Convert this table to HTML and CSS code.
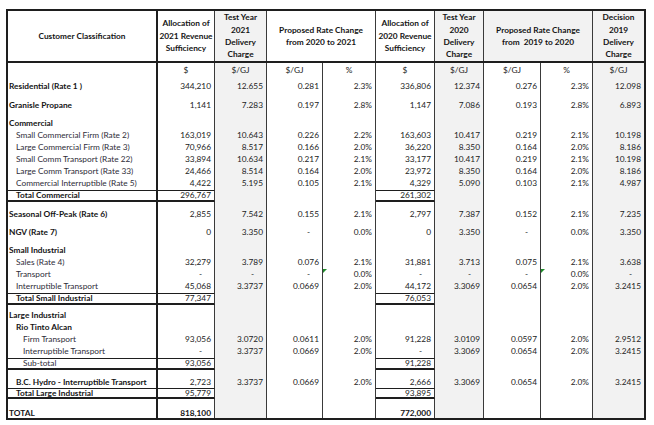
FILE: index.html
```html
<!DOCTYPE html>
<html>
<head>
<meta charset="utf-8">
<link rel="stylesheet" href="styles.css">
</head>
<body>
<div class="sheet">
  <div class="row hdr">
    <div class="c lbl">Customer Classification</div>
    <div class="c">Allocation of<br>2021 Revenue<br>Sufficiency</div>
    <div class="c g">Test Year<br>2021<br>Delivery<br>Charge</div>
    <div class="c span2">Proposed Rate Change<br>from 2020 to 2021</div>
    <div class="c">Allocation of<br>2020 Revenue<br>Sufficiency</div>
    <div class="c g">Test Year<br>2020<br>Delivery<br>Charge</div>
    <div class="c span2">Proposed Rate Change<br>from &nbsp;2019 to 2020</div>
    <div class="c g last">Decision<br>2019<br>Delivery<br>Charge</div>
  </div>

  <div class="row units"><div class="c lbl"></div><div class="c">$</div><div class="c">$/GJ</div><div class="c">$/GJ</div><div class="c">%</div><div class="c">$</div><div class="c">$/GJ</div><div class="c">$/GJ</div><div class="c">%</div><div class="c">$/GJ</div></div>

  <div class="row gap4"><div class="c lbl b">Residential (Rate 1 )</div><div class="c">344,210</div><div class="c">12.655</div><div class="c">0.281</div><div class="c">2.3%</div><div class="c">336,806</div><div class="c">12.374</div><div class="c">0.276</div><div class="c">2.3%</div><div class="c">12.098</div></div>

  <div class="row gap7"><div class="c lbl b">Granisle Propane</div><div class="c">1,141</div><div class="c">7.283</div><div class="c">0.197</div><div class="c">2.8%</div><div class="c">1,147</div><div class="c">7.086</div><div class="c">0.193</div><div class="c">2.8%</div><div class="c">6.893</div></div>

  <div class="row gap6"><div class="c lbl b">Commercial</div><div class="c"></div><div class="c"></div><div class="c"></div><div class="c"></div><div class="c"></div><div class="c"></div><div class="c"></div><div class="c"></div><div class="c"></div></div>
  <div class="row"><div class="c lbl i1">Small Commercial Firm (Rate 2)</div><div class="c">163,019</div><div class="c">10.643</div><div class="c">0.226</div><div class="c">2.2%</div><div class="c">163,603</div><div class="c">10.417</div><div class="c">0.219</div><div class="c">2.1%</div><div class="c">10.198</div></div>
  <div class="row"><div class="c lbl i1">Large Commercial Firm (Rate 3)</div><div class="c">70,966</div><div class="c">8.517</div><div class="c">0.166</div><div class="c">2.0%</div><div class="c">36,220</div><div class="c">8.350</div><div class="c">0.164</div><div class="c">2.0%</div><div class="c">8.186</div></div>
  <div class="row"><div class="c lbl i1">Small Comm Transport (Rate 22)</div><div class="c">33,894</div><div class="c">10.634</div><div class="c">0.217</div><div class="c">2.1%</div><div class="c">33,177</div><div class="c">10.417</div><div class="c">0.219</div><div class="c">2.1%</div><div class="c">10.198</div></div>
  <div class="row"><div class="c lbl i1">Large Comm Transport (Rate 33)</div><div class="c">24,466</div><div class="c">8.514</div><div class="c">0.164</div><div class="c">2.0%</div><div class="c">23,972</div><div class="c">8.350</div><div class="c">0.164</div><div class="c">2.0%</div><div class="c">8.186</div></div>
  <div class="row"><div class="c lbl i1">Commercial Interruptible (Rate 5)</div><div class="c">4,422</div><div class="c">5.195</div><div class="c">0.105</div><div class="c">2.1%</div><div class="c">4,329</div><div class="c">5.090</div><div class="c">0.103</div><div class="c">2.1%</div><div class="c">4.987</div></div>
  <div class="row tot"><div class="c lbl b i1 box">Total Commercial</div><div class="c box">296,767</div><div class="c"></div><div class="c"></div><div class="c"></div><div class="c box">261,302</div><div class="c"></div><div class="c"></div><div class="c"></div><div class="c"></div></div>

  <div class="row gap7"><div class="c lbl b">Seasonal Off-Peak (Rate 6)</div><div class="c">2,855</div><div class="c">7.542</div><div class="c">0.155</div><div class="c">2.1%</div><div class="c">2,797</div><div class="c">7.387</div><div class="c">0.152</div><div class="c">2.1%</div><div class="c">7.235</div></div>

  <div class="row gap6"><div class="c lbl b">NGV (Rate 7)</div><div class="c">0</div><div class="c">3.350</div><div class="c dash">-</div><div class="c">0.0%</div><div class="c">0</div><div class="c">3.350</div><div class="c dash">-</div><div class="c">0.0%</div><div class="c">3.350</div></div>

  <div class="row gap6"><div class="c lbl b">Small Industrial</div><div class="c"></div><div class="c"></div><div class="c"></div><div class="c"></div><div class="c"></div><div class="c"></div><div class="c"></div><div class="c"></div><div class="c"></div></div>
  <div class="row"><div class="c lbl i1">Sales (Rate 4)</div><div class="c">32,279</div><div class="c">3.789</div><div class="c">0.076</div><div class="c">2.1%</div><div class="c">31,881</div><div class="c">3.713</div><div class="c">0.075</div><div class="c">2.1%</div><div class="c">3.638</div></div>
  <div class="row"><div class="c lbl i1">Transport</div><div class="c dash">-</div><div class="c dash">-</div><div class="c dash">-</div><div class="c flag">0.0%</div><div class="c dash">-</div><div class="c dash">-</div><div class="c dash">-</div><div class="c flag">0.0%</div><div class="c dash">-</div></div>
  <div class="row"><div class="c lbl i1">Interruptible Transport</div><div class="c">45,068</div><div class="c">3.3737</div><div class="c">0.0669</div><div class="c">2.0%</div><div class="c">44,172</div><div class="c">3.3069</div><div class="c">0.0654</div><div class="c">2.0%</div><div class="c">3.2415</div></div>
  <div class="row tot"><div class="c lbl b i1 box">Total Small Industrial</div><div class="c box">77,347</div><div class="c"></div><div class="c"></div><div class="c"></div><div class="c box">76,053</div><div class="c"></div><div class="c"></div><div class="c"></div><div class="c"></div></div>

  <div class="row gap5"><div class="c lbl b">Large Industrial</div><div class="c"></div><div class="c"></div><div class="c"></div><div class="c"></div><div class="c"></div><div class="c"></div><div class="c"></div><div class="c"></div><div class="c"></div></div>
  <div class="row"><div class="c lbl b i1">Rio Tinto Alcan</div><div class="c"></div><div class="c"></div><div class="c"></div><div class="c"></div><div class="c"></div><div class="c"></div><div class="c"></div><div class="c"></div><div class="c"></div></div>
  <div class="row"><div class="c lbl i2">Firm Transport</div><div class="c">93,056</div><div class="c">3.0720</div><div class="c">0.0611</div><div class="c">2.0%</div><div class="c">91,228</div><div class="c">3.0109</div><div class="c">0.0597</div><div class="c">2.0%</div><div class="c">2.9512</div></div>
  <div class="row"><div class="c lbl i2">Interruptible Transport</div><div class="c dash">-</div><div class="c">3.3737</div><div class="c">0.0669</div><div class="c">2.0%</div><div class="c dash">-</div><div class="c">3.3069</div><div class="c">0.0654</div><div class="c">2.0%</div><div class="c">3.2415</div></div>
  <div class="row tot"><div class="c lbl i2 box">Sub-total</div><div class="c box">93,056</div><div class="c"></div><div class="c"></div><div class="c"></div><div class="c box">91,228</div><div class="c"></div><div class="c"></div><div class="c"></div><div class="c"></div></div>

  <div class="row gap7 h11"><div class="c lbl b i1">B.C. Hydro - Interruptible Transport</div><div class="c">2,723</div><div class="c">3.3737</div><div class="c">0.0669</div><div class="c">2.0%</div><div class="c">2,666</div><div class="c">3.3069</div><div class="c">0.0654</div><div class="c">2.0%</div><div class="c">3.2415</div></div>
  <div class="row tot h11"><div class="c lbl b i1 box">Total Large Industrial</div><div class="c box">95,779</div><div class="c"></div><div class="c"></div><div class="c"></div><div class="c box">93,895</div><div class="c"></div><div class="c"></div><div class="c"></div><div class="c"></div></div>

  <div class="row grand"><div class="c lbl b">TOTAL</div><div class="c b">818,100</div><div class="c"></div><div class="c"></div><div class="c"></div><div class="c b">772,000</div><div class="c"></div><div class="c"></div><div class="c"></div><div class="c"></div></div>
</div>
</body>
</html>
```

FILE: styles.css
```css
html, body {
  margin: 0;
  padding: 0;
  background: #ffffff;
}

body {
  font-family: Lato, "Liberation Sans", sans-serif;
  font-size: 8.3px;
  color: #222;
}

.sheet {
  box-sizing: border-box;
  width: 640px;
  margin: 9px 0 0 6px;
  border: 2px solid #1e1e1e;
}

.row {
  display: grid;
  grid-template-columns: 150px 57px 52px 56px 53px 59px 49px 57px 52px 51px;
  height: 12px;
}

.row.gap4 { height: 16px; }
.row.gap5 { height: 17px; }
.row.gap6 { height: 18px; }
.row.gap7 { height: 19px; }
.row.h11 { height: 11px; }
.row.gap7.h11 { height: 18px; }
.row.grand { height: 19px; }

.c {
  box-sizing: border-box;
  display: flex;
  align-items: flex-end;
  justify-content: flex-end;
  padding: 0 3px 1px 0;
  line-height: 11px;
  white-space: nowrap;
  overflow: hidden;
  border-right: 1px solid #3a3a3a;
  color: #222;
}

.row > .c:nth-child(10) { border-right: none; }

.row > .c:nth-child(3),
.row > .c:nth-child(7),
.row > .c:nth-child(10) {
  background: #f2f2f2;
}

.c.lbl {
  justify-content: flex-start;
  padding: 0 0 1px 1px;
  border-right: 2px solid #1e1e1e;
  color: #2e2c38;
}

.c.b { font-weight: 700; color: #141414; }
.c.i1 { padding-left: 8px; }
.c.i2 { padding-left: 15px; }
.c.dash { padding-right: 12px; }

.h11 .c { line-height: 10px; }

/* header */
.row.hdr {
  height: 50px;
  border-bottom: 2px solid #1e1e1e;
}

.hdr .c {
  flex-direction: column;
  align-items: center;
  justify-content: center;
  padding: 0;
  text-align: center;
  font-weight: 700;
  line-height: 12.4px;
  color: #141414;
  background: #ffffff;
}

.hdr .c.g { background: #f2f2f2; }
.hdr .c.span2 { grid-column: span 2; }
.hdr .c.last { border-right: none; }
.hdr .c.lbl { border-right: 2px solid #1e1e1e; }

/* units */
.row.units { height: 14px; }
.units .c {
  align-items: center;
  justify-content: center;
  padding: 0;
}

/* totals */
.c.box {
  border-top: 1px solid #1e1e1e;
  border-bottom: 2px solid #1e1e1e;
  align-items: center;
  padding-bottom: 0;
  line-height: 9px;
}

.grand .c { line-height: 8px; padding-bottom: 1px; }

/* excel error indicator */
.c.flag { position: relative; }
.c.flag::before {
  content: "";
  position: absolute;
  left: 0;
  top: 0;
  border-top: 4px solid #1f8a2a;
  border-right: 4px solid transparent;
}
```
